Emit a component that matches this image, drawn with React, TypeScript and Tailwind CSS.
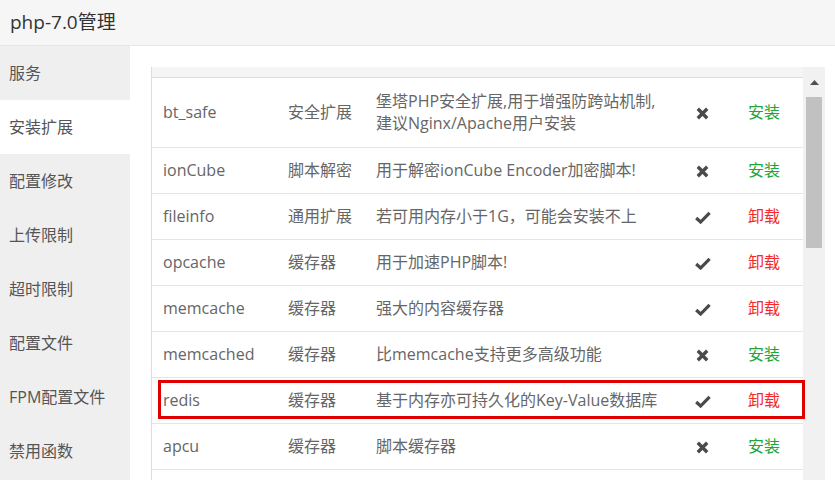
import React from 'react';

type Ext = {
  name: string;
  type: string;
  desc: React.ReactNode;
  installed: boolean;
  tall?: boolean;
};

const menu = ['服务', '安装扩展', '配置修改', '上传限制', '超时限制', '配置文件', 'FPM配置文件', '禁用函数'];

const rows: Ext[] = [
  {
    name: 'bt_safe',
    type: '安全扩展',
    desc: (
      <>
        堡塔PHP安全扩展,用于增强防跨站机制,
        <br />
        建议Nginx/Apache用户安装
      </>
    ),
    installed: false,
    tall: true,
  },
  { name: 'ionCube', type: '脚本解密', desc: '用于解密ionCube Encoder加密脚本!', installed: false },
  { name: 'fileinfo', type: '通用扩展', desc: '若可用内存小于1G，可能会安装不上', installed: true },
  { name: 'opcache', type: '缓存器', desc: '用于加速PHP脚本!', installed: true },
  { name: 'memcache', type: '缓存器', desc: '强大的内容缓存器', installed: true },
  { name: 'memcached', type: '缓存器', desc: '比memcache支持更多高级功能', installed: false },
  { name: 'redis', type: '缓存器', desc: '基于内存亦可持久化的Key-Value数据库', installed: true },
  { name: 'apcu', type: '缓存器', desc: '脚本缓存器', installed: false },
];

function Cross() {
  return (
    <svg width="13" height="13" viewBox="0 0 13 13" className="inline-block align-middle">
      <path d="M1.8 1.8L11.2 11.2M11.2 1.8L1.8 11.2" stroke="#4a4a4a" strokeWidth="3.4" />
    </svg>
  );
}

function Check() {
  return (
    <svg width="16" height="13" viewBox="0 0 16 13" className="inline-block align-middle">
      <path d="M1.2 7L5.6 11L14.6 1.8" stroke="#4a4a4a" strokeWidth="3.2" fill="none" />
    </svg>
  );
}

export default function App() {
  return (
    <div
      className="w-[835px] h-[480px] overflow-hidden bg-white text-[#666]"
      style={{ fontFamily: '"Open Sans", "Noto Sans CJK SC", sans-serif' }}
    >
      {/* title bar */}
      <div className="h-[46px] bg-[#f6f6f6] border-b border-[#e6e6e6] flex items-center px-[10px]">
        <span className="text-[19px] text-[#333]">php-7.0管理</span>
      </div>

      <div className="flex">
        {/* side menu */}
        <div className="w-[130px] shrink-0 bg-[#efefef]">
          {menu.map((m, i) => (
            <div
              key={m}
              className={
                'h-[54px] flex items-center pl-[9px] text-[16px] text-[#555] ' +
                (i === 1 ? 'bg-white' : '')
              }
            >
              {m}
            </div>
          ))}
        </div>

        {/* content */}
        <div className="flex-1 pl-[21px] pt-[21px] h-[434px]">
          <div className="relative flex h-full">
            <div className="w-[652px] border-l border-[#ddd] overflow-hidden">
              <div className="h-[11px] bg-[#f5f5f5] border-b border-[#ddd]" />
              <table className="w-full border-collapse table-fixed text-[16px] leading-[22px]">
                <colgroup>
                  <col className="w-[125px]" />
                  <col className="w-[88px]" />
                  <col className="w-[315px]" />
                  <col className="w-[45px]" />
                  <col />
                </colgroup>
                <tbody>
                  {rows.map((r) => (
                    <tr key={r.name} className={'border-b border-[#e5e5e5] ' + (r.tall ? 'h-[69px]' : 'h-[46px]')}>
                      <td className="p-0 pl-[11px]">{r.name}</td>
                      <td className="p-0 pl-[11px] whitespace-nowrap">{r.type}</td>
                      <td className="p-0 pl-[11px] whitespace-nowrap">{r.desc}</td>
                      <td className="p-0 text-center">{r.installed ? <Check /> : <Cross />}</td>
                      <td className={'p-0 text-center ' + (r.installed ? 'text-[#f42a2a]' : 'text-[#20a53a]')}>
                        {r.installed ? '卸载' : '安装'}
                      </td>
                    </tr>
                  ))}
                  <tr className="h-[46px]">
                    <td />
                    <td />
                    <td />
                    <td />
                    <td />
                  </tr>
                </tbody>
              </table>
            </div>

            {/* scrollbar */}
            <div className="w-[22px] h-full bg-[#f1f1f1] flex flex-col items-center">
              <div className="h-[30px] flex items-center justify-center">
                <svg width="9" height="5" viewBox="0 0 9 5">
                  <path d="M0 5L4.5 0L9 5Z" fill="#505050" />
                </svg>
              </div>
              <div className="w-[16px] h-[151px] bg-[#c1c1c1]" />
            </div>

            {/* highlight box around redis */}
            <div className="absolute left-[7px] top-[313px] w-[647px] h-[39px] border-[3px] border-[#e00000]" />
          </div>
        </div>
      </div>
    </div>
  );
}
